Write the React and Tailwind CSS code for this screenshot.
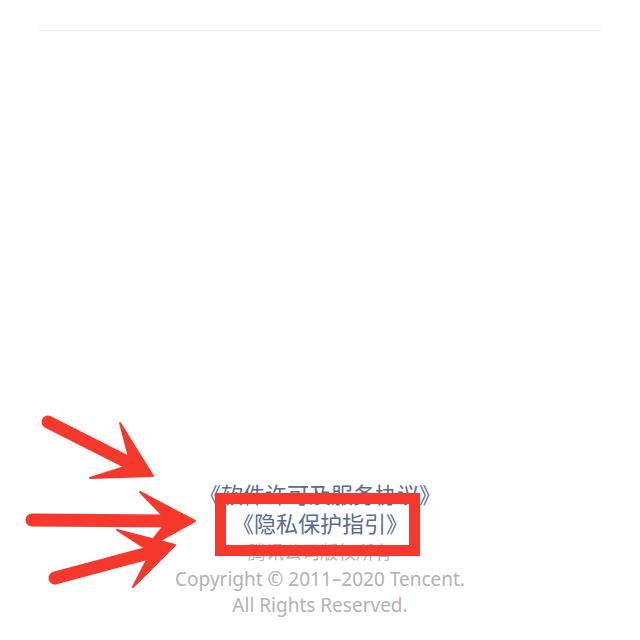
import React from 'react';

const Arrows = () => (
  <svg className="absolute inset-0 pointer-events-none" width="640" height="640" viewBox="0 0 640 640">
    <g fill="#f6382d" stroke="#f6382d" strokeLinecap="round" strokeLinejoin="round">
      {/* arrow 1 */}
      <line x1="48" y1="422" x2="133" y2="465" strokeWidth="13" />
      <polygon points="153,476 120,423 131,465 90,478" strokeWidth="2" />
      {/* arrow 2 */}
      <line x1="32" y1="520" x2="170" y2="521" strokeWidth="13" />
      <polygon points="195,521 140,492 168,521 146,548" strokeWidth="2" />
      {/* arrow 3 */}
      <line x1="55" y1="578" x2="152" y2="552" strokeWidth="13" />
      <polygon points="175,545 117,530 151,552 133,587" strokeWidth="2" />
    </g>
    <rect x="220.5" y="498.5" width="194" height="52" fill="none" stroke="#f6382d" strokeWidth="11" />
  </svg>
);

export default function App() {
  return (
    <div
      className="relative w-[640px] h-[640px] bg-white flex flex-col overflow-hidden"
      style={{ fontFamily: '"Noto Sans", "Noto Sans CJK SC", sans-serif' }}
    >
      <div className="mt-[30px] mx-[38px] h-px bg-[#efefef]" />
      <div className="flex-1" />
      <div className="flex flex-col items-center pb-[22px] text-center">
        <a className="text-[22px] leading-[29px] text-[#576b95]">《软件许可及服务协议》</a>
        <a className="text-[22px] leading-[29px] text-[#576b95]">《隐私保护指引》</a>
        <p className="text-[18px] leading-[28px] text-[#b2b2b2]">腾讯公司版权所有</p>
        <p className="text-[19px] leading-[26px] text-[#b2b2b2]">Copyright © 2011–2020 Tencent.</p>
        <p className="text-[19px] leading-[26px] text-[#b2b2b2]">All Rights Reserved.</p>
      </div>
      <Arrows />
    </div>
  );
}
